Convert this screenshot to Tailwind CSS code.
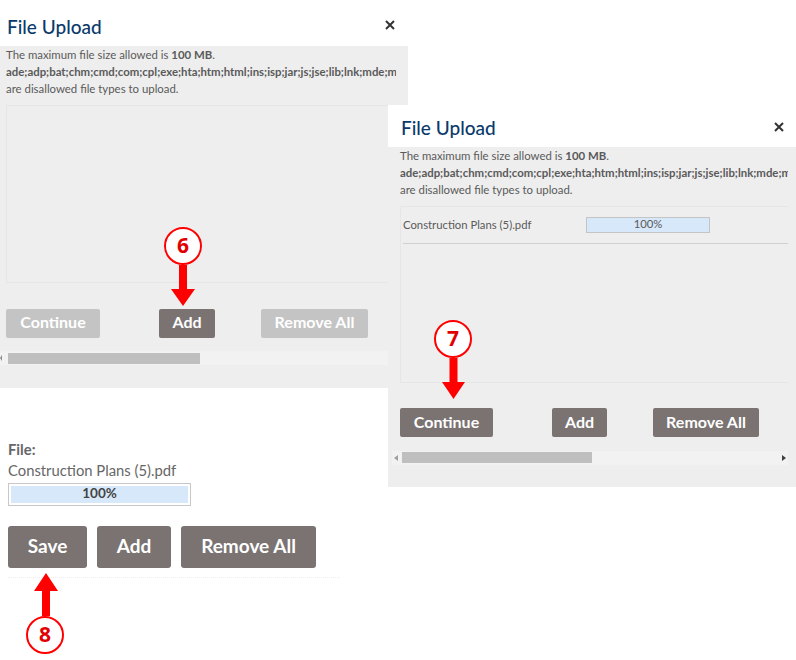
<!DOCTYPE html>
<html lang="en">
<head>
    <meta charset="UTF-8">
    <title>File Upload</title>
    <script src="https://cdn.jsdelivr.net/npm/@tailwindcss/browser@4"></script>
</head>
<body class="bg-white">
    <div class="relative w-[796px] h-[660px] overflow-hidden bg-white font-['Lato','Open_Sans',sans-serif] text-[#5a5a5a]">

        <!-- First dialog -->
        <div class="absolute left-0 top-0 w-[408px] h-[388px] flex flex-col">
            <div class="h-[46px] bg-white flex justify-between pl-[7px] pr-[13px] pt-[13px]">
                <h2 class="text-[19px] leading-[27px] font-medium text-[#0a3a6b]">File Upload</h2>
                <svg class="mt-[7px] w-[10px] h-[10px]" viewBox="0 0 10 10"><path d="M1 1L9 9M9 1L1 9" stroke="#333" stroke-width="2"/></svg>
            </div>
            <div class="flex-1 bg-[#eeeeee] w-full">
                <div class="pl-[6px] text-[11.4px] leading-[17px] w-[396px]">
                    <p>The maximum file size allowed is <b>100 MB</b>.</p>
                    <p class="font-bold overflow-hidden whitespace-nowrap">ade;adp;bat;chm;cmd;com;cpl;exe;hta;htm;html;ins;isp;jar;js;jse;lib;lnk;mde;msc;msp;mst</p>
                    <p>are disallowed file types to upload.</p>
                </div>
                <div class="ml-[6px] mt-[8px] w-[382px] h-[178px] border border-r-0 border-[#e6e6e6]"></div>
                <div class="flex w-[388px] pl-[6px] mt-[26px] h-[29px] text-[16px] font-bold text-white">
                    <div class="w-[94px] pb-[3px] rounded-[2px] bg-[#c4c4c4] flex items-center justify-center">Continue</div>
                    <div class="w-[56px] ml-[59px] pb-[3px] rounded-[2px] bg-[#7a7372] flex items-center justify-center">Add</div>
                    <div class="w-[107px] ml-[46px] pb-[3px] rounded-[2px] bg-[#c4c4c4] flex items-center justify-center">Remove All</div>
                </div>
                <div class="relative w-[388px] h-[14px] mt-[13px] bg-[#f2f2f2] flex items-center">
                    <svg class="w-[2px] h-[6px]" viewBox="0 0 2 6"><path d="M2 0V6L0 3Z" fill="#8a8a8a"/></svg>
                    <div class="absolute left-[8px] top-[2px] w-[192px] h-[11px] bg-[#bfbfbf]"></div>
                </div>
            </div>
        </div>

        <!-- Second dialog -->
        <div class="absolute left-[388px] top-[105px] w-[408px] h-[382px] flex flex-col">
            <div class="h-[42px] bg-white flex justify-between pl-[13px] pr-[12px] pt-[9px]">
                <h2 class="text-[19px] leading-[27px] font-medium text-[#0a3a6b]">File Upload</h2>
                <svg class="mt-[8px] w-[10px] h-[10px]" viewBox="0 0 10 10"><path d="M1 1L9 9M9 1L1 9" stroke="#333" stroke-width="2"/></svg>
            </div>
            <div class="flex-1 bg-[#eeeeee]">
                <div class="pl-[12px] text-[11.4px] leading-[17px] w-[400px]">
                    <p>The maximum file size allowed is <b>100 MB</b>.</p>
                    <p class="font-bold overflow-hidden whitespace-nowrap">ade;adp;bat;chm;cmd;com;cpl;exe;hta;htm;html;ins;isp;jar;js;jse;lib;lnk;mde;msc;msp;mst</p>
                    <p>are disallowed file types to upload.</p>
                </div>
                <div class="ml-[12px] mt-[8px] w-[388px] h-[177px] border border-r-0 border-[#e6e6e6]">
                    <div class="ml-[2px] h-[37px] flex items-center border-b border-[#d0d0d0] text-[11.3px]">
                        <span class="w-[183px]">Construction Plans (5).pdf</span>
                        <div class="w-[124px] h-[16px] bg-[#d6e8f9] border border-[#c4c4c4] text-center leading-[12px]">100%</div>
                    </div>
                </div>
                <div class="flex ml-[12px] mt-[25px] h-[29px] text-[16px] font-bold text-white">
                    <div class="w-[93px] pb-[2px] rounded-[2px] bg-[#7a7372] flex items-center justify-center">Continue</div>
                    <div class="w-[55px] ml-[59px] pb-[2px] rounded-[2px] bg-[#7a7372] flex items-center justify-center">Add</div>
                    <div class="w-[106px] ml-[46px] pb-[2px] rounded-[2px] bg-[#7a7372] flex items-center justify-center">Remove All</div>
                </div>
                <div class="relative ml-[4px] w-[396px] h-[14px] mt-[14px] bg-[#f2f2f2] flex items-center justify-between px-[2px]">
                    <svg class="w-[4px] h-[6px]" viewBox="0 0 4 6"><path d="M4 0V6L0 3Z" fill="#a0a0a0"/></svg>
                    <div class="absolute left-[10px] top-[1px] w-[190px] h-[11px] bg-[#bfbfbf]"></div>
                    <svg class="w-[4px] h-[6px]" viewBox="0 0 4 6"><path d="M0 0V6L4 3Z" fill="#404040"/></svg>
                </div>
            </div>
        </div>

        <!-- Third panel -->
        <div class="absolute left-[8px] top-[439px] w-[332px] h-[139px] border-b border-dotted border-[#eeeeee] text-[14.8px] text-[#666]">
            <p class="font-bold leading-[20px]">File:</p>
            <p class="leading-[21px] mt-[1px]">Construction Plans (5).pdf</p>
            <div class="w-[183px] h-[23px] mt-[2px] border border-[#c8c8c8] bg-white p-[2px]">
                <div class="h-full bg-[#d6e8f9] text-center text-[13.5px] font-bold text-[#444] leading-[15px]">100%</div>
            </div>
            <div class="flex gap-[10px] mt-[20px] h-[42px] text-[19px] font-bold text-white">
                <div class="w-[79px] pb-[2px] rounded-[3px] bg-[#7a7372] flex items-center justify-center">Save</div>
                <div class="w-[74px] pb-[2px] rounded-[3px] bg-[#7a7372] flex items-center justify-center">Add</div>
                <div class="w-[135px] pb-[2px] rounded-[3px] bg-[#7a7372] flex items-center justify-center">Remove All</div>
            </div>
        </div>

        <!-- Callouts -->
        <div class="absolute left-[164px] top-[227px] w-[38px] h-[38px] rounded-full border-2 border-[#ff0000] bg-white flex items-center justify-center font-['Open_Sans',sans-serif] text-[21px] font-bold text-[#e00000]">6</div>
        <svg class="absolute left-[171px] top-[265px]" width="24" height="41" viewBox="0 0 24 41"><path d="M8 0H16V24H24L12 41L0 24H8Z" fill="#ff0000"/></svg>

        <div class="absolute left-[434px] top-[320px] w-[38px] h-[38px] rounded-full border-2 border-[#ff0000] bg-white flex items-center justify-center font-['Open_Sans',sans-serif] text-[21px] font-bold text-[#e00000]">7</div>
        <svg class="absolute left-[442px] top-[358px]" width="23" height="41" viewBox="0 0 23 41"><path d="M7.500 0H15.500V24H23L11.500 41L0 24H7.500Z" fill="#ff0000"/></svg>

        <div class="absolute left-[26px] top-[616px] w-[38px] h-[38px] rounded-full border-2 border-[#ff0000] bg-white flex items-center justify-center font-['Open_Sans',sans-serif] text-[21px] font-bold text-[#e00000]">8</div>
        <svg class="absolute left-[34px] top-[573px]" width="24" height="43" viewBox="0 0 24 43"><path d="M8 43H16V18H24L12 0L0 18H8Z" fill="#ff0000"/></svg>
    </div>
</body>
</html>
